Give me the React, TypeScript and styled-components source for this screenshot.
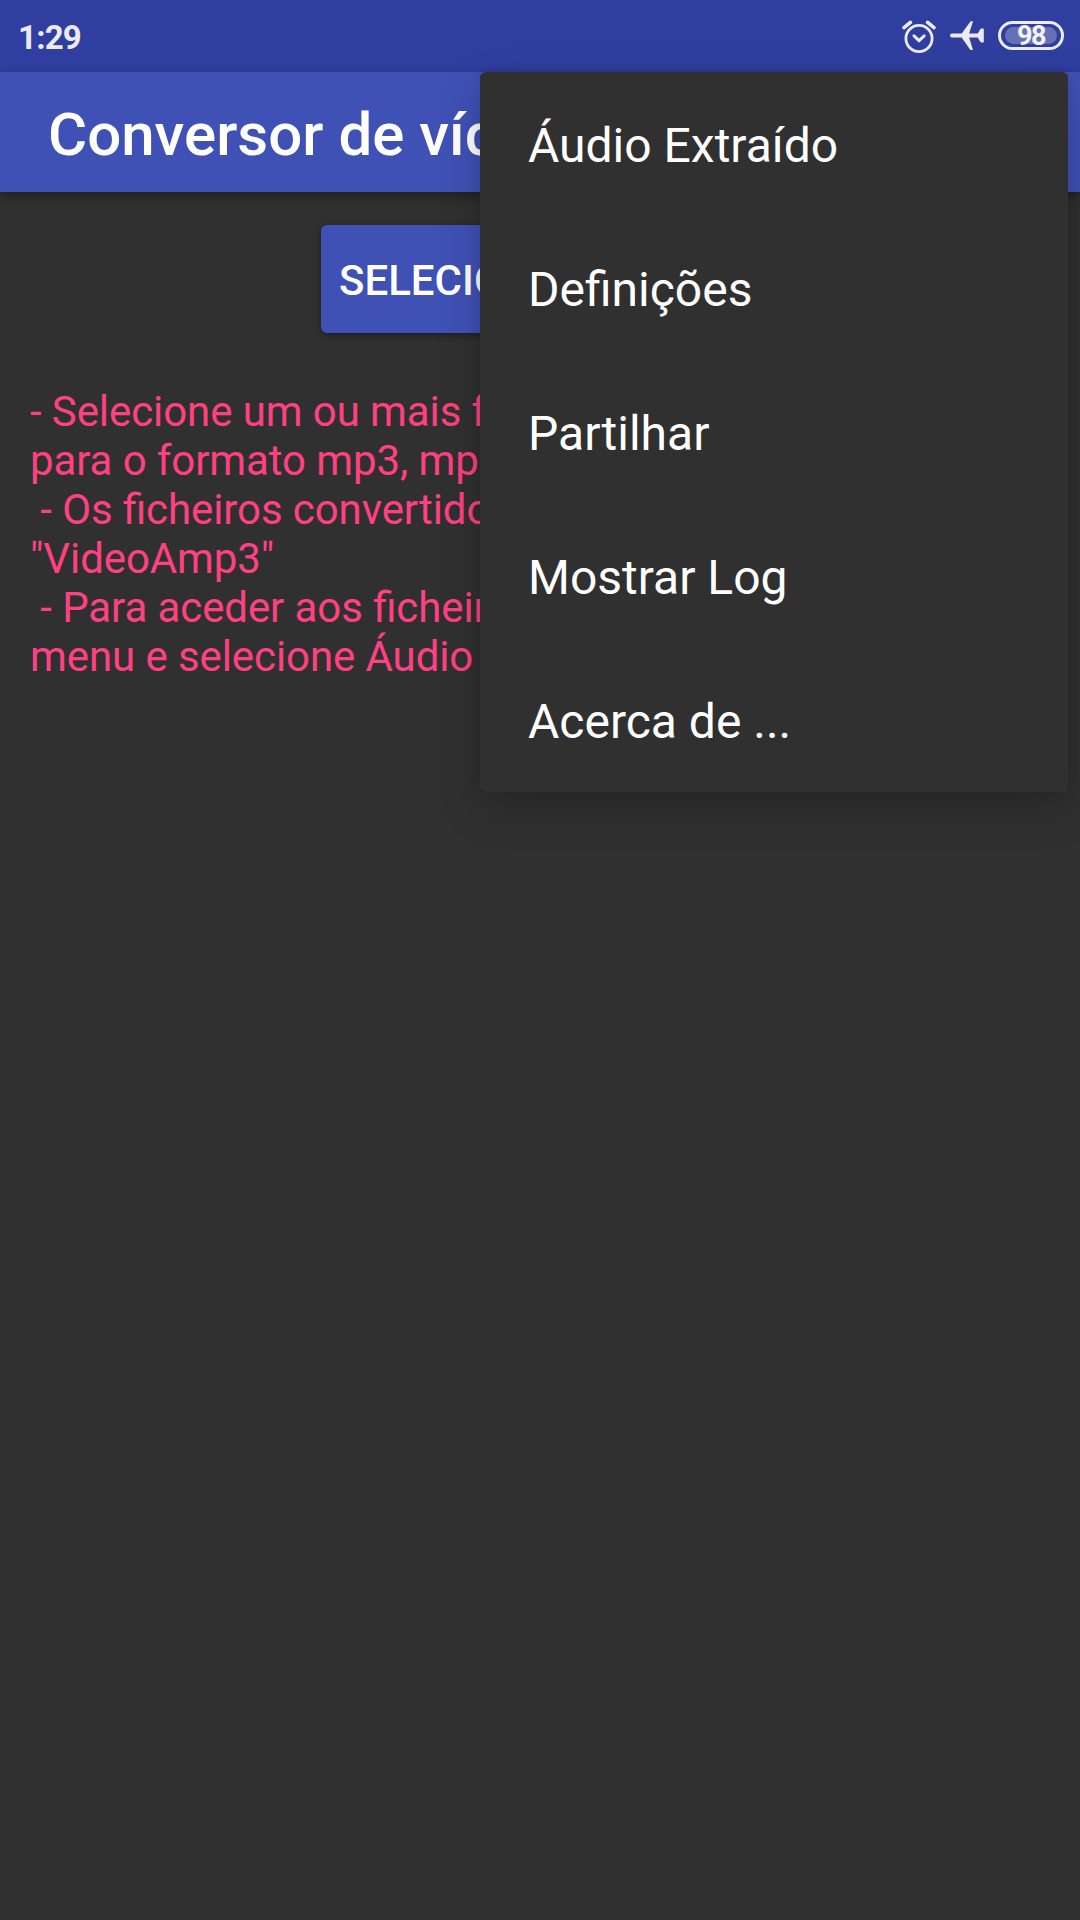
import React from "react";
import styled, { createGlobalStyle } from "styled-components";

const GlobalStyle = createGlobalStyle`
  * { box-sizing: border-box; }
  html, body { margin: 0; padding: 0; background: #303030; }
  body { font-family: Roboto, "Liberation Sans", sans-serif; overflow: hidden; }
`;

const Screen = styled.div`
  position: relative;
  display: flex;
  flex-direction: column;
  width: 1080px;
  height: 1920px;
  overflow: hidden;
  background: #303030;
`;

const StatusBar = styled.header`
  display: flex;
  align-items: center;
  justify-content: space-between;
  height: 72px;
  padding: 0 16px 0 18px;
  background: #303f9f;
  color: #ebebf6;
`;

const Clock = styled.span`
  font-size: 33px;
  line-height: 38px;
  font-weight: 700;
  letter-spacing: -0.8px;
  padding-top: 3px;
`;

const StatusIcons = styled.div`
  display: flex;
  align-items: center;
  height: 72px;
`;

const StatusIcon = styled.svg<{ $gap: number }>`
  display: block;
  margin-right: ${(p) => p.$gap}px;
`;

const Battery = styled.div`
  display: flex;
  width: 66px;
  height: 29px;
  margin-bottom: 1px;
  padding: 3px 4px;
  border: 3px solid #ebebf6;
  border-radius: 15px;
`;

const BatteryLevel = styled.div`
  display: flex;
  flex: 1;
  align-items: center;
  justify-content: center;
  padding-top: 2px;
  border-radius: 9px;
  background: #6670b6;
  font-size: 27px;
  line-height: 17px;
  letter-spacing: -1.4px;
  font-weight: 700;
  color: #f3f3fa;
`;

const Toolbar = styled.div`
  position: relative;
  display: flex;
  align-items: center;
  height: 120px;
  padding: 5px 48px 0;
  background: #3f51b5;
  box-shadow: 0 4px 10px rgba(0, 0, 0, 0.36);
`;

const Title = styled.h1`
  margin: 0;
  color: #fff;
  font-size: 60px;
  line-height: 70px;
  font-weight: 500;
  white-space: nowrap;
`;

const Content = styled.main`
  display: flex;
  flex-direction: column;
  align-items: center;
  padding: 33px 30px 0;
`;

const SelectButton = styled.button`
  width: 438px;
  height: 108px;
  padding: 2px 0 0 18px;
  border: 0;
  border-radius: 6px;
  background: #3f51b5;
  box-shadow: 0 2px 6px rgba(0, 0, 0, 0.4);
  color: #fff;
  font-family: inherit;
  font-size: 42px;
  font-weight: 500;
  text-align: left;
  white-space: nowrap;
  overflow: hidden;
`;

const Instructions = styled.p`
  align-self: stretch;
  margin: 54px 0 0;
  color: #ff4081;
  font-size: 42px;
  line-height: 49px;
  letter-spacing: -0.09px;
  font-feature-settings: "liga" 1;
  white-space: pre;
`;

const Menu = styled.ul`
  position: absolute;
  top: 72px;
  right: 12px;
  width: 588px;
  margin: 0;
  padding: 0;
  list-style: none;
  border-radius: 6px;
  background: #303030;
  box-shadow: 0 16px 44px rgba(0, 0, 0, 0.2), 0 0 12px rgba(0, 0, 0, 0.08);
`;

const MenuItem = styled.li`
  display: flex;
  align-items: center;
  height: 144px;
  padding: 4px 48px 0;
  color: #fff;
  font-size: 48px;
  line-height: 56px;
`;

const menuItems = ["Áudio Extraído", "Definições", "Partilhar", "Mostrar Log", "Acerca de ..."];

const instructions = [
  "- Selecione um ou mais f",
  "para o formato mp3, mp",
  " - Os ficheiros convertido",
  "\"VideoAmp3\"",
  " - Para aceder aos ficheir",
  "menu e selecione Áudio",
].join("\n");

export default function App() {
  return (
    <>
      <GlobalStyle />
      <Screen>
        <StatusBar>
          <Clock>1:29</Clock>
          <StatusIcons>
            <StatusIcon $gap={14} width="34" height="34" viewBox="0 0 34 34" fill="none" stroke="#ebebf6" strokeLinecap="round">
              <circle cx="17" cy="19.5" r="13.1" strokeWidth="2.8" />
              <path d="M12 16.9L17 21.6L22.2 16.9" strokeWidth="3" strokeLinejoin="miter" />
              <path d="M2 8.6L8.4 3.4M32 8.6L25.6 3.4" strokeWidth="3.6" />
            </StatusIcon>
            <StatusIcon $gap={14} width="34" height="30" viewBox="0 0 34 30" fill="#ebebf6">
              <path d="M2.1 12.4H11.7L20.2 .7Q20.5 .3 21 .3H22.2Q23.1 .3 22.8 1.1L19.1 12.4H27.8L30.1 8.4Q30.5 7.6 31.3 7.6H33.1Q33.8 7.6 33.8 8.3V20.7Q33.8 21.4 33.1 21.4H31.3Q30.5 21.4 30.1 20.6L27.8 16.6H19.1L22.8 28.3Q23.1 29.1 22.2 29.1H21Q20.5 29.1 20.2 28.7L11.7 16.6H2.1A2.1 2.1 0 0 1 2.1 12.4Z" />
            </StatusIcon>
            <Battery>
              <BatteryLevel>98</BatteryLevel>
            </Battery>
          </StatusIcons>
        </StatusBar>
        <Toolbar>
          <Title>Conversor de víd</Title>
        </Toolbar>
        <Content>
          <SelectButton>SELECIO</SelectButton>
          <Instructions>{instructions}</Instructions>
        </Content>
        <Menu>
          {menuItems.map((label) => (
            <MenuItem key={label}>{label}</MenuItem>
          ))}
        </Menu>
      </Screen>
    </>
  );
}
